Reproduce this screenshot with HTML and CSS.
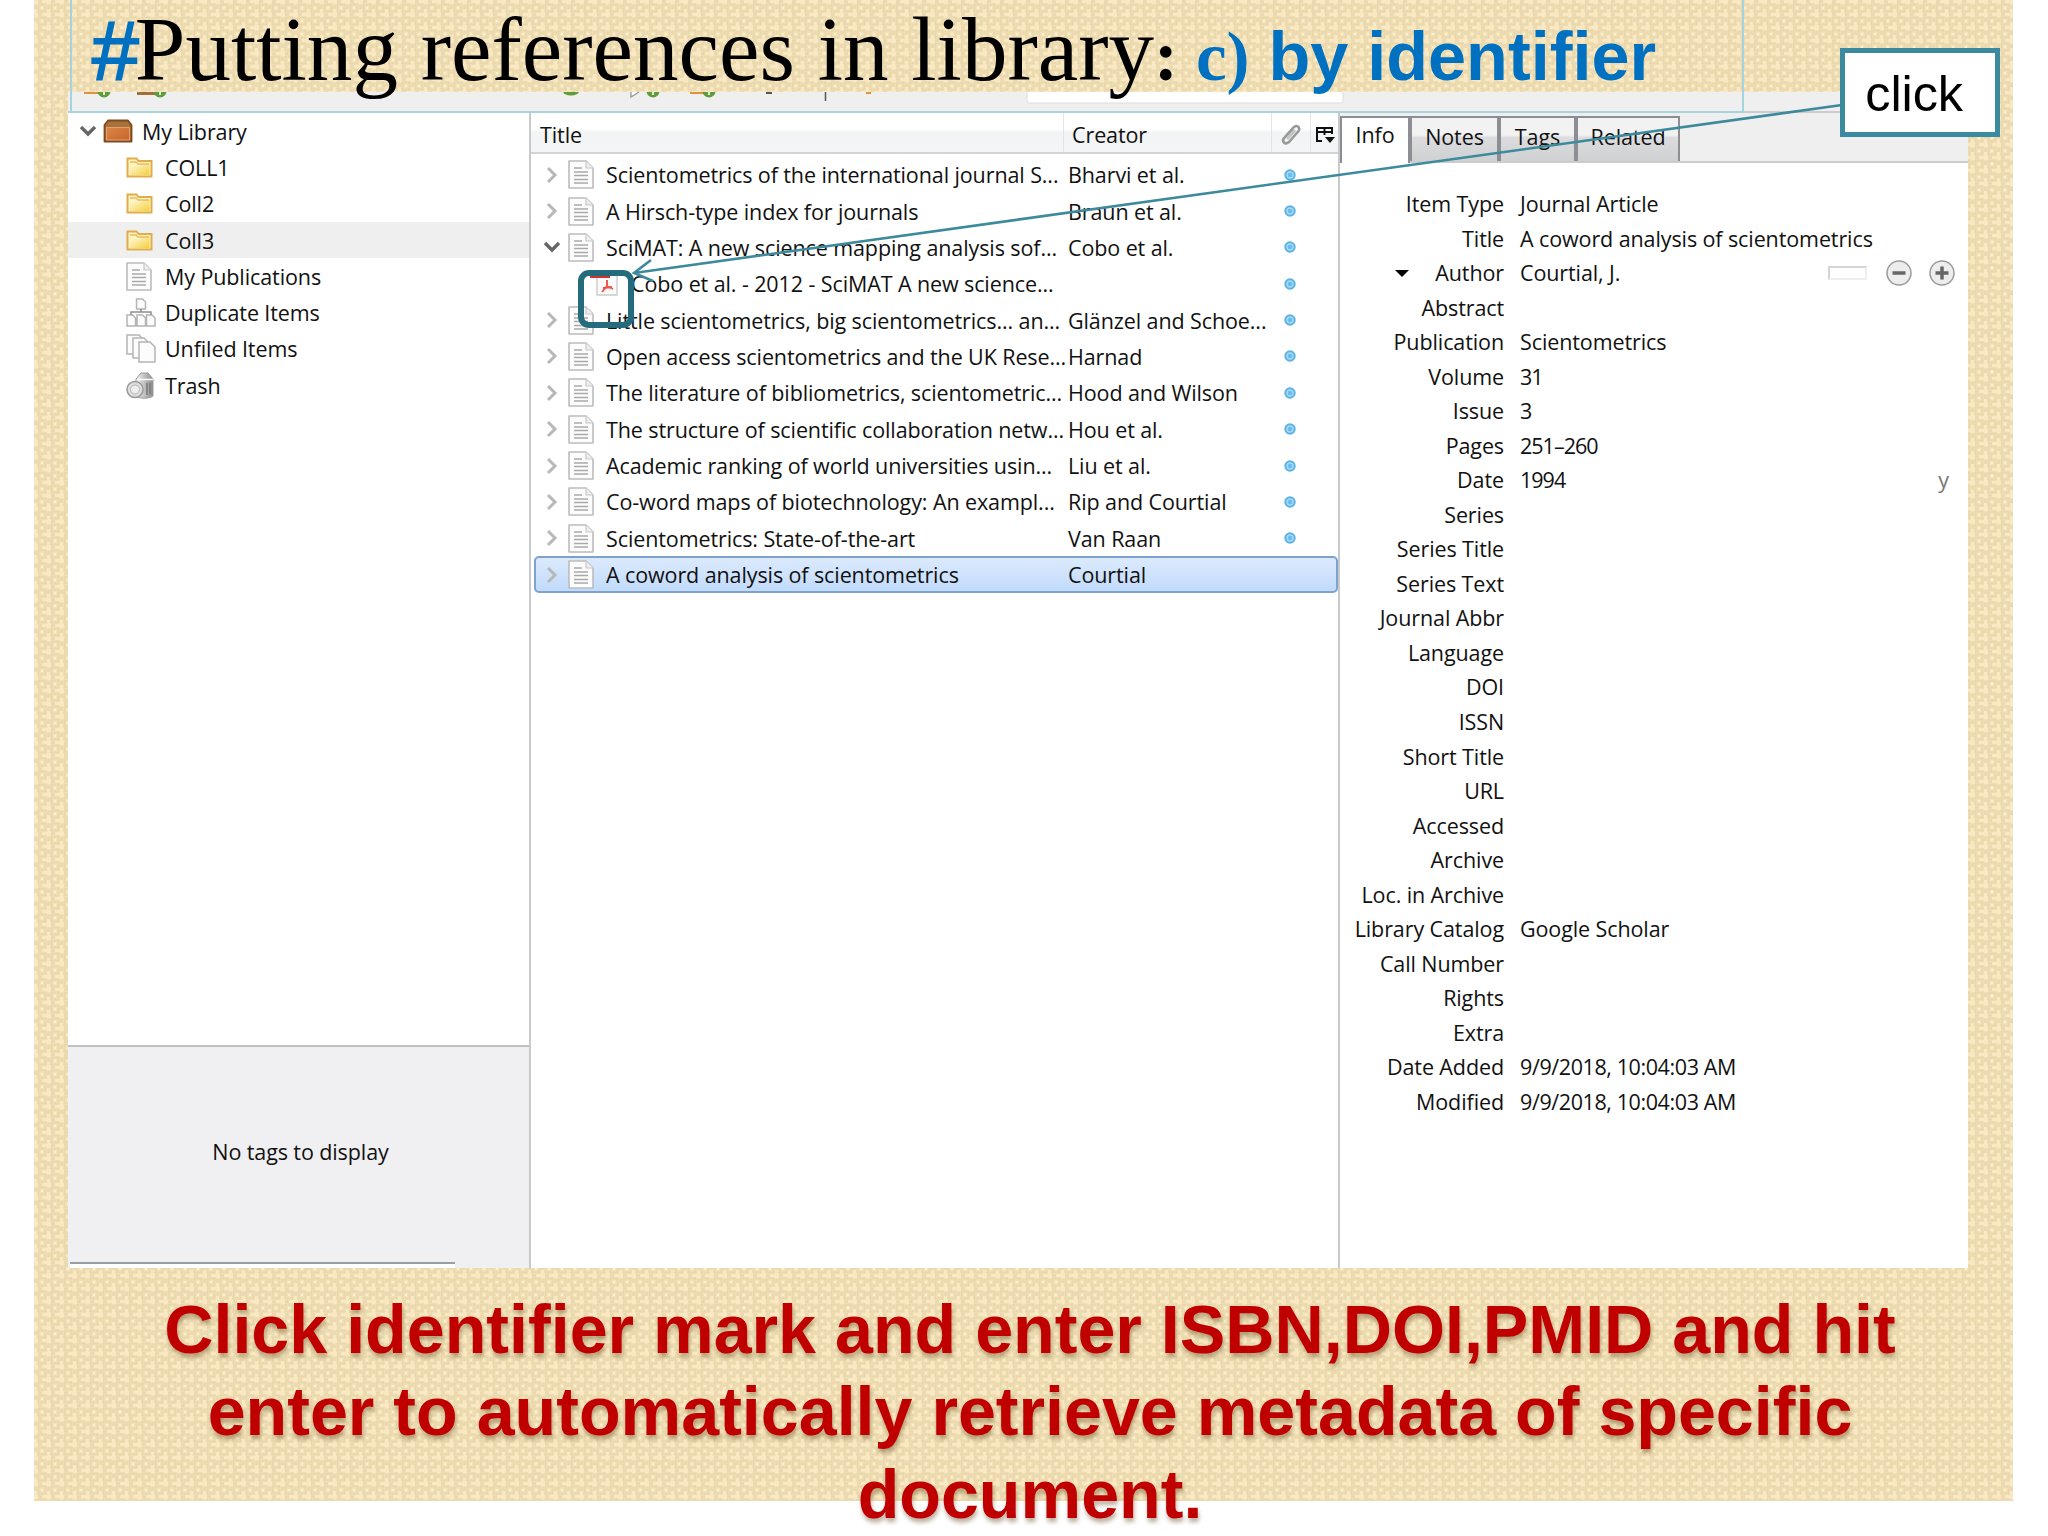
FILE: index.html
```html
<!DOCTYPE html>
<html lang="en">
<head>
    <meta charset="UTF-8">
    <title>Putting references in library</title>
    <link rel="stylesheet" href="styles.css">
</head>
<body>
    <!-- icon sprite -->
    <svg class="sprite" width="0" height="0">
        <defs>
            <linearGradient id="gold" x1="0" y1="0" x2="1" y2="1">
                <stop offset="0" stop-color="#fffbe0"/>
                <stop offset="1" stop-color="#f6cf3c"/>
            </linearGradient>
            <linearGradient id="wood" x1="0" y1="0" x2="1" y2="1">
                <stop offset="0" stop-color="#d98748"/>
                <stop offset="1" stop-color="#c8642a"/>
            </linearGradient>
            <linearGradient id="silver" x1="0" y1="0" x2="1" y2="0">
                <stop offset="0" stop-color="#f4f4f4"/>
                <stop offset="1" stop-color="#8c8c8c"/>
            </linearGradient>
        </defs>
        <symbol id="right" viewBox="0 0 12 18"><path d="M2 2l7 7-7 7" fill="none" stroke="#b8b8b8" stroke-width="3"/></symbol>
        <symbol id="down" viewBox="0 0 18 12"><path d="M2 2l7 7 7-7" fill="none" stroke="#666" stroke-width="3.4"/></symbol>
        <symbol id="box" viewBox="0 0 30 24">
            <path d="M1.500 6L5 1.500h20L28.500 6v16.500h-27z" fill="#a8713c" stroke="#7c4a1c" stroke-width="1.800" stroke-linejoin="round"/>
            <path d="M3.500 8.500h23v12.500h-23z" fill="url(#wood)" stroke="#e8a06a" stroke-width="1"/>
        </symbol>
        <symbol id="folder" viewBox="0 0 27 21">
            <path d="M1.500 1.500h9l2 2.500h13v15.500h-24z" fill="#fff3c0" stroke="#e2ac4c" stroke-width="2"/>
            <path d="M4 9h9l2-2h8.500v11H4z" fill="url(#gold)"/>
            <path d="M4 5h6l2 2h11" fill="none" stroke="#e6bd62" stroke-width="1.500"/>
        </symbol>
        <symbol id="page" viewBox="0 0 26 29">
            <path d="M1 1h17l7 7v20H1z" fill="#fcfcfc" stroke="#bcbcbc" stroke-width="1.600" stroke-linejoin="round"/>
            <path d="M18 1v7h7" fill="#eee" stroke="#c8c8c8" stroke-width="1.200"/>
            <path d="M6 8h8M6 12h14M6 15.500h14M6 19.500h14M6 23h14" stroke="#a9a9a9" stroke-width="1.500"/>
        </symbol>
        <symbol id="dup" viewBox="0 0 30 29">
            <g fill="#fcfcfc" stroke="#b4b4b4" stroke-width="1.500">
                <path d="M10.500 1h6l3 3v7h-9zM1 17h5.500l3 3v8H1zM11 17h5.500l3 3v8H11zM20.500 17H26l3 3v8h-8.500z"/>
                <path d="M15 11v3M5 17v-3h20v3" fill="none" stroke="#8e8e8e"/>
            </g>
        </symbol>
        <symbol id="unfiled" viewBox="0 0 30 29">
            <g fill="#fcfcfc" stroke="#b4b4b4" stroke-width="1.500">
                <path d="M1 1h12l3 3v16H1z"/><path d="M7 4h11l4 4v16H7z"/><path d="M13 8h11l5 5v15H13z"/>
            </g>
        </symbol>
        <symbol id="trash" viewBox="0 0 29 28">
            <path d="M10 8l5-6h7l5 6v17c-4 3-13 3-17 0z" fill="url(#silver)" stroke="#999"/>
            <path d="M11 8.500h16" stroke="#fff" stroke-width="1.500"/>
            <path d="M21 12v12M24 12v11" stroke="#777" stroke-width="1.500"/>
            <circle cx="9" cy="18.500" r="8" fill="#dedede" stroke="#999" stroke-width="1.500"/>
            <circle cx="9" cy="18.500" r="4.500" fill="#eee" stroke="#b5b5b5"/>
        </symbol>
        <symbol id="pdf" viewBox="0 0 28 26">
            <path d="M7 1h17l3 3v20H7z" fill="#fafafa" stroke="#ccc" stroke-width="1.400"/>
            <path d="M0 0h20v7H0z" fill="#d3312b"/>
            <path d="M17 9v6l-5 6M17 15l6 3M13 17l9-1" fill="none" stroke="#f0524c" stroke-width="1.900"/>
        </symbol>
        <symbol id="dot" viewBox="0 0 12 12">
            <circle cx="6" cy="6" r="5.700" fill="#5ab2e6"/><circle cx="6" cy="6" r="3" fill="#6cbcea" stroke="#a5daf5" stroke-width="1.400"/>
        </symbol>
    </svg>

    <main class="slide">
        <header class="heading">
            <h1><span class="hash">#</span>Putting references in library<b>:</b> <span class="part"><span class="letter">c)</span> by identifier</span></h1>
        </header>

        <section class="app">
            <div class="toolbar">
                <svg width="1900" height="20" viewBox="68 92 1900 20">
                    <path d="M84 93h17M690 93h15M866 93h5" stroke="#e0923e" stroke-width="2"/>
                    <path d="M137 93.500h20" stroke="#a0703c" stroke-width="3"/>
                    <g fill="#5f9c3c">
                        <circle cx="104" cy="91" r="6.500"/><circle cx="160" cy="91" r="6.500"/>
                        <ellipse cx="571" cy="91" rx="8" ry="4.500"/>
                        <circle cx="653" cy="91" r="6.500"/><circle cx="709" cy="91" r="6.500"/>
                    </g>
                    <path d="M104 92v3M160 92v3M653 92v3M709 92v3" stroke="#e2f2d6" stroke-width="2"/>
                    <path d="M631 92v5l8-5" fill="#fff" stroke="#999" stroke-width="1.300"/>
                    <path d="M766 93h6M1190 93h6" stroke="#555" stroke-width="2"/>
                    <path d="M825.500 92v9" stroke="#555" stroke-width="1.500"/>
                    <path d="M1027 90h316v11q0 2-2 2h-312q-2 0-2-2z" fill="#fff" stroke="#ddd"/>
                </svg>
            </div>

            <aside class="collections">
                <ul class="tree">
                    <li class="root"><svg class="twisty" width="18" height="12"><use href="#down"/></svg><svg width="30" height="24"><use href="#box"/></svg><span>My Library</span></li>
                    <li><svg width="27" height="21"><use href="#folder"/></svg><span>COLL1</span></li>
                    <li><svg width="27" height="21"><use href="#folder"/></svg><span>Coll2</span></li>
                    <li class="current"><svg width="27" height="21"><use href="#folder"/></svg><span>Coll3</span></li>
                    <li><svg width="26" height="29"><use href="#page"/></svg><span>My Publications</span></li>
                    <li><svg width="30" height="29"><use href="#dup"/></svg><span>Duplicate Items</span></li>
                    <li><svg width="30" height="29"><use href="#unfiled"/></svg><span>Unfiled Items</span></li>
                    <li><svg width="29" height="28"><use href="#trash"/></svg><span>Trash</span></li>
                </ul>
                <div class="tags">
                    <p>No tags to display</p>
                    <div class="tag-filter"></div>
                </div>
            </aside>

            <section class="items">
                <div class="columns">
                    <span class="col-title">Title</span>
                    <span class="col-creator">Creator</span>
                    <span class="col-icon"><svg width="22" height="24" viewBox="0 0 20 24"><path d="M3 15L13 4q3-2 4.500 0t0 4L8 19q-3 2.500-5 .5T3 15l9-9" fill="none" stroke="#999" stroke-width="2.600"/><path d="M6 16l8-9" stroke="#c4c4c4" stroke-width="3"/></svg></span>
                    <span class="col-icon"><svg width="20" height="18" viewBox="0 0 20 18"><path d="M7 15H2V2h15v6M2 6h15M9.500 2v7M2 2h15" fill="none" stroke="#111" stroke-width="2"/><path d="M10 11h10l-5 6z" fill="#111"/></svg></span>
                </div>
                <ul class="rows">
                    <li><svg class="twisty" width="12" height="18"><use href="#right"/></svg><svg width="26" height="29"><use href="#page"/></svg><span class="name">Scientometrics of the international journal S...</span><span class="creator">Bharvi et al.</span><svg width="12" height="12"><use href="#dot"/></svg></li>
                    <li><svg class="twisty" width="12" height="18"><use href="#right"/></svg><svg width="26" height="29"><use href="#page"/></svg><span class="name">A Hirsch-type index for journals</span><span class="creator">Braun et al.</span><svg width="12" height="12"><use href="#dot"/></svg></li>
                    <li><svg class="twisty" width="18" height="12"><use href="#down"/></svg><svg width="26" height="29"><use href="#page"/></svg><span class="name">SciMAT: A new science mapping analysis sof...</span><span class="creator">Cobo et al.</span><svg width="12" height="12"><use href="#dot"/></svg></li>
                    <li class="child"><svg width="28" height="26"><use href="#pdf"/></svg><span class="name">Cobo et al. - 2012 - SciMAT A new science...</span><span class="creator"></span><svg width="12" height="12"><use href="#dot"/></svg></li>
                    <li><svg class="twisty" width="12" height="18"><use href="#right"/></svg><svg width="26" height="29"><use href="#page"/></svg><span class="name">Little scientometrics, big scientometrics... an...</span><span class="creator">Glänzel and Schoe...</span><svg width="12" height="12"><use href="#dot"/></svg></li>
                    <li><svg class="twisty" width="12" height="18"><use href="#right"/></svg><svg width="26" height="29"><use href="#page"/></svg><span class="name">Open access scientometrics and the UK Rese...</span><span class="creator">Harnad</span><svg width="12" height="12"><use href="#dot"/></svg></li>
                    <li><svg class="twisty" width="12" height="18"><use href="#right"/></svg><svg width="26" height="29"><use href="#page"/></svg><span class="name">The literature of bibliometrics, scientometric...</span><span class="creator">Hood and Wilson</span><svg width="12" height="12"><use href="#dot"/></svg></li>
                    <li><svg class="twisty" width="12" height="18"><use href="#right"/></svg><svg width="26" height="29"><use href="#page"/></svg><span class="name">The structure of scientific collaboration netw...</span><span class="creator">Hou et al.</span><svg width="12" height="12"><use href="#dot"/></svg></li>
                    <li><svg class="twisty" width="12" height="18"><use href="#right"/></svg><svg width="26" height="29"><use href="#page"/></svg><span class="name">Academic ranking of world universities usin...</span><span class="creator">Liu et al.</span><svg width="12" height="12"><use href="#dot"/></svg></li>
                    <li><svg class="twisty" width="12" height="18"><use href="#right"/></svg><svg width="26" height="29"><use href="#page"/></svg><span class="name">Co-word maps of biotechnology: An exampl...</span><span class="creator">Rip and Courtial</span><svg width="12" height="12"><use href="#dot"/></svg></li>
                    <li><svg class="twisty" width="12" height="18"><use href="#right"/></svg><svg width="26" height="29"><use href="#page"/></svg><span class="name">Scientometrics: State-of-the-art</span><span class="creator">Van Raan</span><svg width="12" height="12"><use href="#dot"/></svg></li>
                    <li class="selected"><svg class="twisty" width="12" height="18"><use href="#right"/></svg><svg width="26" height="29"><use href="#page"/></svg><span class="name">A coword analysis of scientometrics</span><span class="creator">Courtial</span></li>
                </ul>
            </section>

            <section class="details">
                <nav class="tabs">
                    <span class="tab active">Info</span>
                    <span class="tab notes">Notes</span>
                    <span class="tab tagtab">Tags</span>
                    <span class="tab related">Related</span>
                </nav>
                <dl class="fields">
                    <dt>Item Type</dt><dd>Journal Article</dd>
                    <dt>Title</dt><dd>A coword analysis of scientometrics</dd>
                    <dt><i class="caret"></i>Author</dt>
                    <dd>Courtial, J.
                        <span class="controls">
                            <i class="mode"></i>
                            <svg width="26" height="26" viewBox="0 0 26 26"><circle cx="13" cy="13" r="12" fill="#ededed" stroke="#9c9c9c" stroke-width="1.500"/><path d="M6.500 13h13" stroke="#666" stroke-width="3.500"/></svg>
                            <svg width="26" height="26" viewBox="0 0 26 26"><circle cx="13" cy="13" r="12" fill="#ededed" stroke="#9c9c9c" stroke-width="1.500"/><path d="M6.500 13h13M13 6.500v13" stroke="#666" stroke-width="3.500"/></svg>
                        </span>
                    </dd>
                    <dt>Abstract</dt><dd></dd>
                    <dt>Publication</dt><dd>Scientometrics</dd>
                    <dt>Volume</dt><dd class="num">31</dd>
                    <dt>Issue</dt><dd class="num">3</dd>
                    <dt>Pages</dt><dd class="num">251–260</dd>
                    <dt>Date</dt><dd class="num">1994 <span class="hint">y</span></dd>
                    <dt>Series</dt><dd></dd>
                    <dt>Series Title</dt><dd></dd>
                    <dt>Series Text</dt><dd></dd>
                    <dt>Journal Abbr</dt><dd></dd>
                    <dt>Language</dt><dd></dd>
                    <dt>DOI</dt><dd></dd>
                    <dt>ISSN</dt><dd></dd>
                    <dt>Short Title</dt><dd></dd>
                    <dt>URL</dt><dd></dd>
                    <dt>Accessed</dt><dd></dd>
                    <dt>Archive</dt><dd></dd>
                    <dt>Loc. in Archive</dt><dd></dd>
                    <dt>Library Catalog</dt><dd>Google Scholar</dd>
                    <dt>Call Number</dt><dd></dd>
                    <dt>Rights</dt><dd></dd>
                    <dt>Extra</dt><dd></dd>
                    <dt>Date Added</dt><dd class="stamp">9/9/2018, 10:04:03 AM</dd>
                    <dt>Modified</dt><dd class="stamp">9/9/2018, 10:04:03 AM</dd>
                </dl>
            </section>
        </section>

        <p class="caption">Click identifier mark and enter ISBN,DOI,PMID and hit<br>enter to automatically retrieve metadata of specific<br>document.</p>
    </main>

    <!-- callout over the window -->
    <svg class="arrow" width="2048" height="400" viewBox="0 0 2048 400">
        <path d="M1842 105L634 273M651 260L634 273L653 281" fill="none" stroke="#3d8a9d" stroke-width="2.600"/>
    </svg>
    <div class="marker"></div>
    <div class="callout">click</div>
</body>
</html>
```
FILE: styles.css
```css
* { box-sizing: border-box; }
body { margin: 0; width: 2048px; height: 1536px; overflow: hidden; background: #fff; position: relative; font-family: "Open Sans", "Noto Sans", sans-serif; font-size: 21.5px; letter-spacing: -0.1px; color: #111; }
h1, p, ul, dl, dd { margin: 0; padding: 0; }
ul { list-style: none; }
svg { display: block; flex: none; }
.sprite { position: absolute; }

.slide {
    margin-left: 34px;
    padding-left: 34px;
    width: 1979px;
    height: 1501px;
    background-color: #f3e2b9;
    /* woven check with small rings, 13px repeat */
    background-image: url("data:image/svg+xml,%3Csvg xmlns='http://www.w3.org/2000/svg' width='13' height='13'%3E%3Cpath fill='%23f9e8c1' d='M0 0h4v4H0zM8 0h5v3H8zM0 9h3v4H0z'/%3E%3Cpath fill='%23ebd9b0' d='M4 0h4v3H4zM0 5h3v4H0z'/%3E%3Crect x='4.500' y='4.500' width='7' height='7' fill='%23f3e2b8' stroke='%23e9d8ae' stroke-width='2'/%3E%3Crect x='7' y='7' width='2' height='2' fill='%23fdf0cc'/%3E%3C/svg%3E");
}

/* heading */
.heading { position: relative; z-index: 1; height: 113px; width: 1674px; margin-left: 2px; padding-left: 20px; border: 2px solid #a5d3de; border-top: 0; letter-spacing: 0; }
h1 { font: 91.1px/100px "Liberation Serif", serif; white-space: nowrap; color: #000; }
h1 b { font-size: 72px; }
.hash { margin-right: -4px; font-family: "Liberation Sans", sans-serif; font-size: 84px; color: #0070c0; -webkit-text-stroke: 2px #0070c0; }
.part { margin-left: -5px; font: bold 68.4px "Liberation Sans", sans-serif; color: #0070c0; }
.letter { font-family: "Liberation Serif", serif; font-size: 69px; }

/* window */
.app { width: 1900px; height: 1176px; margin-top: -21px; background: #fff; display: grid; grid-template: 21px 1fr / 463px 809px 1fr; }
.toolbar { grid-column: 1 / 4; background: #efeff0; border-bottom: 2px solid #ccc; overflow: hidden; }

.collections { display: flex; flex-direction: column; border-right: 2px solid #c8c9cb; }
.tree { flex: 1; }
.tree li { display: flex; align-items: center; height: 36.3px; padding-left: 58px; }
.tree li svg { margin-right: auto; }
.tree li span { width: 364px; }
.tree .root { padding-left: 11px; }
.tree .root .twisty { margin-right: 6px; }
.tree .root span { width: 387px; }
.tree .current { background: #efeff0; }
.tags { height: 223px; background: #f0eff1; border-top: 2px solid #c0c1c4; display: flex; flex-direction: column; }
.tags p { flex: 1; display: flex; align-items: center; justify-content: center; padding: 0 0 6px 4px; }
.tag-filter { width: 385px; height: 6px; margin-left: 2px; background: #fff; border-top: 2px solid #9a9ea6; }

.items { border-right: 2px solid #c8c9cb; }
.columns { display: flex; height: 41px; border-bottom: 2px solid #d2d3d5; background: linear-gradient(#fff 40%, #f3f4f5 50%, #f4f5f6); }
.columns span { display: flex; align-items: center; padding-top: 4px; border-right: 1px solid #e4e5e7; }
.columns .col-title { width: 533px; padding-left: 9px; }
.columns .col-creator { width: 208px; padding-left: 8px; }
.columns .col-icon { width: 39px; justify-content: center; }
.columns .col-icon:last-child { flex: 1; border: 0; }
.rows { padding-top: 2.5px; }
.rows li { display: flex; align-items: center; height: 36.36px; padding-left: 12px; white-space: nowrap; }
.rows .twisty { width: 18px; margin-right: 7px; }
.name { flex: none; width: 474px; padding-left: 12px; }
.creator { flex: none; width: 216px; }
.rows .child { padding-left: 59px; }
.rows .child .name { width: 450px; padding-left: 13px; }
.rows .selected { margin: 0 0 0 3px; padding-left: 7px; border: 2px solid #7da2ce; border-radius: 5px; background: linear-gradient(#dceafd, #c1dbfc); }

.details { display: flex; flex-direction: column; }
.tabs { display: flex; height: 50px; padding-top: 3px; background: #f0eff0; border-bottom: 2px solid #cbccce; }
.tab { height: 45px; padding: 4px 0 0; display: flex; justify-content: center; border: 2px solid #8d8e94; border-bottom: 0; background: linear-gradient(#f2f2f3 40%, #dcdcde 45%, #cfd0d2); }
.tab.active { width: 70px; height: 47px; padding-top: 2px; background: #fff; }
.notes { width: 89px; }
.tagtab { width: 77px; }
.related { width: 104px; }
.fields { display: grid; grid-template-columns: 164px 1fr; grid-auto-rows: 34.54px; column-gap: 16px; padding-top: 24px; line-height: 34px; }
.fields dt { text-align: right; white-space: nowrap; }
.fields dd { display: flex; justify-content: space-between; }
.num { letter-spacing: -1px; }
.stamp { letter-spacing: -0.4px; }
.caret { display: inline-block; border: 7px solid transparent; border-top-color: #000; border-bottom: 0; margin-right: 26px; vertical-align: 4px; }
.controls { display: flex; align-items: center; gap: 17px; padding-right: 13px; }
.mode { width: 39px; height: 14px; border: 2px solid #d4d4d4; border-right-color: #eee; border-bottom-color: #eee; margin-right: 2px; }
.hint { color: #777; padding-right: 20px; }

/* bottom text */
.caption { width: 1900px; padding: 20px 0 0; margin-left: 12px; font: bold 68.2px/82.3px "Liberation Sans", sans-serif; letter-spacing: 0; text-align: center; white-space: nowrap; color: #c00000; text-shadow: 1px 4px 4px rgba(90, 60, 20, .4); }

.arrow { position: absolute; left: 0; top: 0; z-index: 2; }
.marker { position: absolute; z-index: 2; left: 578px; top: 270px; width: 56px; height: 58px; border: 6px solid #246c7c; border-radius: 11px; }
.callout { position: absolute; z-index: 3; left: 1840px; top: 48px; width: 160px; height: 89px; padding-right: 32px; border: 5px solid #3a8ba0; background: #fff; color: #000; font: 50.5px/82px "Liberation Sans", sans-serif; text-align: right; }
```
